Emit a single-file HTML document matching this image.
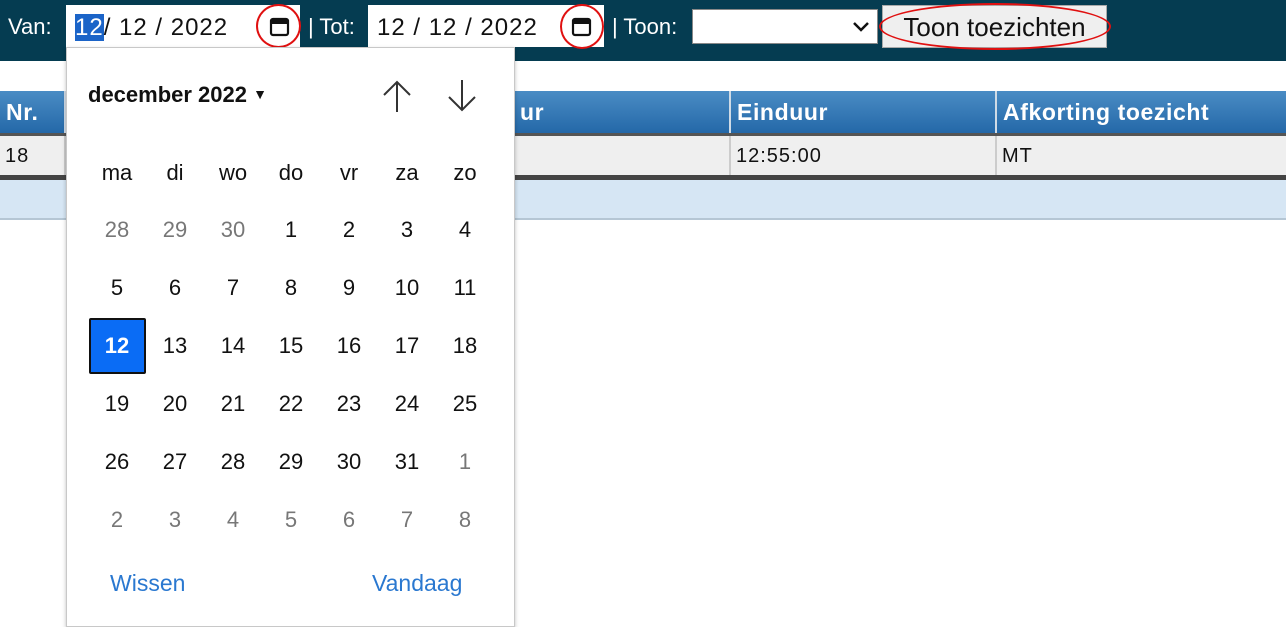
<!DOCTYPE html>
<html><head><meta charset="utf-8"><style>
*{box-sizing:border-box;margin:0;padding:0}
body{width:1286px;height:627px;background:#fff;font-family:"Liberation Sans",Arial,sans-serif;position:relative;overflow:hidden}
.a{position:absolute}
.bar{left:0;top:0;width:1286px;height:61px;background:#053c51}
.lbl{color:#fff;font-size:22px;top:14px}
.inp{background:#fff;top:5px;height:42px;font-size:24px;color:#111;padding:9px 0 0 9px;letter-spacing:1px;white-space:pre}
.th{top:91px;height:42px;background:linear-gradient(#4a8cc4,#2468a8);color:#fff;font-weight:bold;font-size:23px;letter-spacing:.6px;padding:8px 6px;border-right:2px solid #cfdbe6}
.td{top:136px;height:39px;background:#efefef;font-size:20px;letter-spacing:1px;color:#111;padding:9px 5px;border-right:2px solid #ccc}
.pop{left:66px;top:47px;width:449px;height:580px;background:#fff;border:1px solid #c8c8c8;box-shadow:0 2px 4px rgba(0,0,0,.25)}
.d{width:58px;text-align:center;font-size:22px;color:#111}
.g{color:#777}
.circ{border:2.5px solid #e01010;border-radius:50%}
</style></head><body>
<div class="a bar"></div>
<div class="a lbl" style="left:8px">Van:</div>
<div class="a inp" style="left:66px;width:234px"><span style="background:#1b64c8;color:#fff">12</span>/ 12 / 2022</div>
<svg class="a" style="left:269px;top:14px" width="22" height="24"><rect x="2" y="5" width="17" height="16" rx="2" fill="none" stroke="#111" stroke-width="2.2"/><rect x="2" y="5" width="17" height="5" fill="#111"/></svg>
<div class="a circ" style="left:256px;top:4px;width:45px;height:44px"></div>
<div class="a lbl" style="left:308px">| Tot:</div>
<div class="a inp" style="left:368px;width:236px">12 / 12 / 2022</div>
<svg class="a" style="left:571px;top:14px" width="22" height="24"><rect x="2" y="5" width="17" height="16" rx="2" fill="none" stroke="#111" stroke-width="2.2"/><rect x="2" y="5" width="17" height="5" fill="#111"/></svg>
<div class="a circ" style="left:560px;top:4px;width:44px;height:45px"></div>
<div class="a lbl" style="left:612px">| Toon:</div>
<div class="a" style="left:692px;top:9px;width:186px;height:35px;background:#fff;border:1px solid #888"></div>
<svg class="a" style="left:852px;top:20px" width="18" height="14"><path d="M2 3l7 7 7-7" fill="none" stroke="#111" stroke-width="2.5"/></svg>
<div class="a" style="left:882px;top:5px;width:225px;height:43px;background:#efefef;border:1px solid #aaa;font-size:26px;text-align:center;padding-top:6px;color:#111">Toon toezichten</div>
<div class="a circ" style="left:879px;top:3px;width:232px;height:47px"></div>

<div class="a th" style="left:0;width:66px">Nr.</div>
<div class="a th" style="left:514px;width:217px">ur</div>
<div class="a th" style="left:731px;width:266px">Einduur</div>
<div class="a th" style="left:997px;width:289px;border-right:0">Afkorting toezicht</div>
<div class="a" style="left:0;top:133px;width:1286px;height:3px;background:#555"></div>
<div class="a td" style="left:0;width:66px">18</div>
<div class="a td" style="left:514px;width:217px"></div>
<div class="a td" style="left:731px;width:266px">12:55:00</div>
<div class="a td" style="left:997px;width:289px;border-right:0">MT</div>
<div class="a" style="left:0;top:175px;width:1286px;height:5px;background:#444"></div>
<div class="a" style="left:0;top:180px;width:1286px;height:40px;background:#d6e6f4;border-bottom:2px solid #b5c6d4"></div>

<div class="a pop"></div>
<div class="a" style="left:88px;top:82px;font-size:22px;font-weight:bold;color:#111">december 2022 <span style="font-size:14px;vertical-align:3px">▼</span></div>
<svg class="a" style="left:380px;top:78px" width="100" height="38"><path d="M17 34V4M4 17L17 4 30 17" fill="none" stroke="#333" stroke-width="2"/><path d="M82 2v30M69 19l13 13 13-13" fill="none" stroke="#333" stroke-width="2"/></svg>
<div class="a" style="left:88px;top:160px">
<div style="display:flex"><div class="d">ma</div><div class="d">di</div><div class="d">wo</div><div class="d">do</div><div class="d">vr</div><div class="d">za</div><div class="d">zo</div></div>
</div>
<div class="a" style="left:88px;top:217px">
<div style="display:flex;height:58px;line-height:26px"><div class="d g">28</div><div class="d g">29</div><div class="d g">30</div><div class="d">1</div><div class="d">2</div><div class="d">3</div><div class="d">4</div></div>
<div style="display:flex;height:58px;line-height:26px"><div class="d">5</div><div class="d">6</div><div class="d">7</div><div class="d">8</div><div class="d">9</div><div class="d">10</div><div class="d">11</div></div>
<div style="display:flex;height:58px;line-height:26px"><div class="d"><span style="display:inline-block;width:57px;height:56px;margin-top:-16px;background:#0a6cf5;border:2px solid #111;border-radius:2px;color:#fff;font-weight:bold;line-height:52px">12</span></div><div class="d">13</div><div class="d">14</div><div class="d">15</div><div class="d">16</div><div class="d">17</div><div class="d">18</div></div>
<div style="display:flex;height:58px;line-height:26px"><div class="d">19</div><div class="d">20</div><div class="d">21</div><div class="d">22</div><div class="d">23</div><div class="d">24</div><div class="d">25</div></div>
<div style="display:flex;height:58px;line-height:26px"><div class="d">26</div><div class="d">27</div><div class="d">28</div><div class="d">29</div><div class="d">30</div><div class="d">31</div><div class="d g">1</div></div>
<div style="display:flex;height:58px;line-height:26px"><div class="d g">2</div><div class="d g">3</div><div class="d g">4</div><div class="d g">5</div><div class="d g">6</div><div class="d g">7</div><div class="d g">8</div></div>
</div>
<div class="a" style="left:110px;top:570px;font-size:23px;color:#2a78d0">Wissen</div>
<div class="a" style="left:372px;top:570px;font-size:23px;color:#2a78d0">Vandaag</div>
</body></html>
